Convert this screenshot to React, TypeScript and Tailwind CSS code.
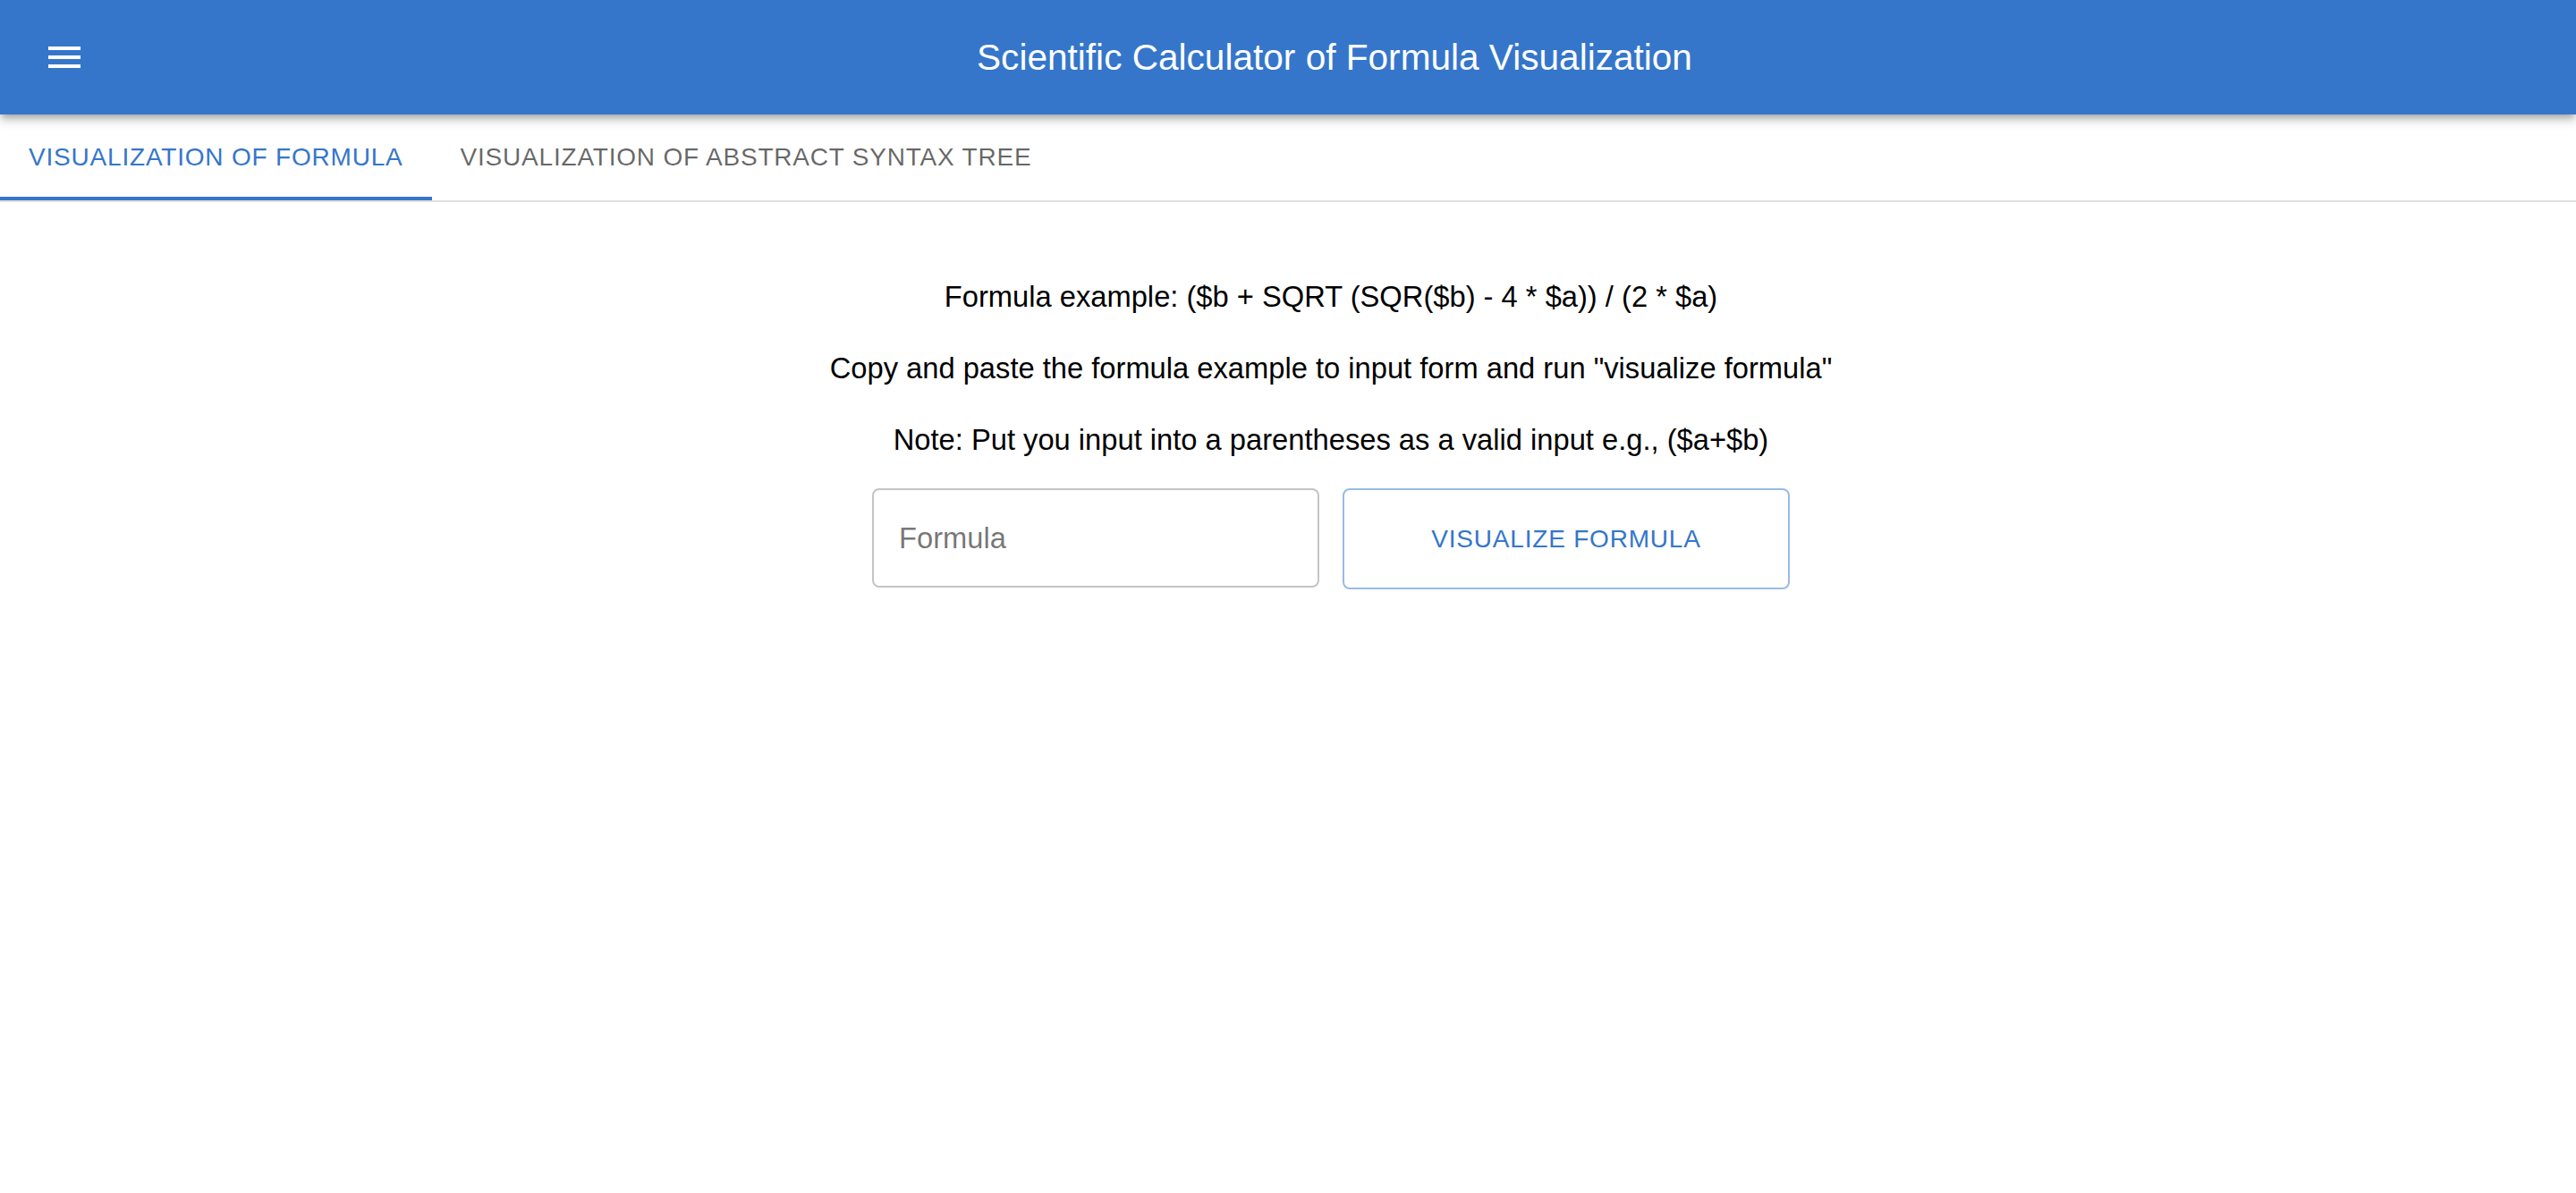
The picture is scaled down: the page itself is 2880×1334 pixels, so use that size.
import React, { useState } from "react";

const MenuIcon = () => (
  <svg viewBox="0 0 24 24" className="w-12 h-12" fill="currentColor">
    <path d="M3 18h18v-2H3v2zm0-5h18v-2H3v2zm0-7v2h18V6H3z" />
  </svg>
);

const tabs = ["Visualization of Formula", "Visualization of Abstract Syntax Tree"];

export default function App() {
  const [tab, setTab] = useState(0);
  const [formula, setFormula] = useState("");

  return (
    <div
      className="min-h-screen bg-white text-black"
      style={{ fontFamily: '"Liberation Sans", Arial, sans-serif' }}
    >
      <header className="relative z-10 h-32 bg-[#3576cb] text-white flex items-center px-12 shadow-[0_4px_8px_-2px_rgba(0,0,0,0.3),0_8px_10px_0_rgba(0,0,0,0.14)]">
        <button className="-ml-6 mr-8 p-6 rounded-full">
          <MenuIcon />
        </button>
        <h1 className="flex-1 text-center text-[40.6px] leading-none">
          Scientific Calculator of Formula Visualization
        </h1>
      </header>

      <nav className="flex border-b-2 border-[#e0e0e0]">
        {tabs.map((label, i) => (
          <button
            key={label}
            onClick={() => setTab(i)}
            className={
              i === tab
                ? "relative h-24 px-8 uppercase text-[28px] tracking-[0.8px] text-[#3576cb]"
                : "relative h-24 px-8 uppercase text-[28px] tracking-[0.8px] text-black/60"
            }
          >
            {label}
            {i === tab && (
              <span className="absolute left-0 right-0 bottom-0 h-1 bg-[#3576cb]" />
            )}
          </button>
        ))}
      </nav>

      <main className="pl-24 pt-[86px] flex flex-col items-center text-[32.7px] leading-none">
        <p className="h-10 flex items-center">
          Formula example: ($b + SQRT (SQR($b) - 4 * $a)) / (2 * $a)
        </p>
        <p className="mt-10 h-10 flex items-center">
          Copy and paste the formula example to input form and run "visualize formula"
        </p>
        <p className="mt-10 h-10 flex items-center">
          Note: Put you input into a parentheses as a valid input e.g., ($a+$b)
        </p>
        <div className="mt-[34px] flex gap-[26px]">
          <input
            value={formula}
            onChange={(e) => setFormula(e.target.value)}
            placeholder="Formula"
            className="w-[500px] h-[111px] px-7 rounded-lg border-2 border-[#c4c4c4] text-[32.7px] placeholder:text-black/55 outline-none"
          />
          <button className="w-[500px] h-[113px] rounded-lg border-2 border-[#3576cb]/50 text-[#3576cb] uppercase text-[28px] tracking-[0.8px]">
            Visualize Formula
          </button>
        </div>
      </main>
    </div>
  );
}
